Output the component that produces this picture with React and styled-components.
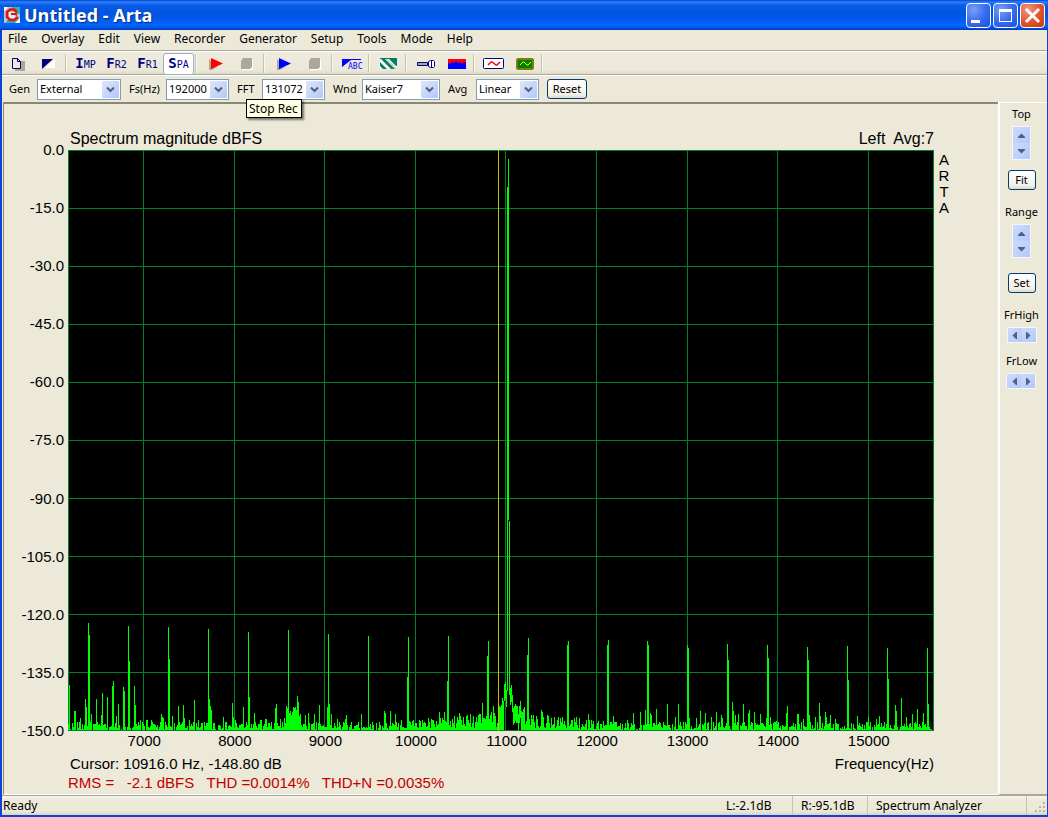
import React from 'react'
import { styled, createGlobalStyle } from 'styled-components'

const GlobalStyle = createGlobalStyle`
    * {
        box-sizing: border-box;
    }
    body {
        margin: 0;
        font-family: "Noto Sans", Tahoma, sans-serif;
        font-size: 12px;
        line-height: 16px;
        color: #000;
        background: #ece9d8;
    }
`

const Window = styled.div`
    display: flex;
    flex-direction: column;
    min-height: 100vh;
    background: #ece9d8;
    border: solid #0a43d6;
    border-width: 0 2px 2px 2px;
    border-right-width: 1px;
`

const TitleBar = styled.header`
    display: flex;
    align-items: center;
    gap: 4px;
    height: 30px;
    margin: 0 -1px 0 -2px;
    padding: 0 3px 0 4px;
    background: linear-gradient(#0046d8 0, #2a80f8 2px, #0a5ce6 5px, #0055e0 12px, #0058ea 18px, #0066fe 25px, #0055e5 28px, #0038b8 30px);
`

const Title = styled.h1`
    flex: 1;
    margin: 0;
    font-family: "Open Sans", "Trebuchet MS", sans-serif;
    font-size: 18px;
    line-height: 24px;
    font-weight: 700;
    color: #fff;
    text-shadow: 1px 1px 1px #0a2a80;
`

const TitleButtons = styled.div`
    display: flex;
    gap: 2px;
`

const TitleButton = styled.button`
    display: flex;
    width: 25px;
    height: 25px;
    padding: 0;
    border: 1px solid #fff;
    border-radius: 4px;
    background: ${props => props.$close
        ? "radial-gradient(circle at 30% 25%, #f09a80, #e2502c 55%, #c43a10)"
        : "radial-gradient(circle at 30% 25%, #7aa0f4, #3a6cf0 50%, #1a50e0)"};
`

const MenuBar = styled.nav`
    display: flex;
    gap: 14px;
    height: 22px;
    padding: 0 6px 3px;
    border-bottom: 1px solid #fff;
    box-shadow: inset 0 -1px #aca899;
`

const MenuItem = styled.button`
    padding: 0;
    border: none;
    background: none;
    font: inherit;
`

const Toolbar = styled.div`
    display: flex;
    align-items: center;
    height: 24px;
    border-bottom: 1px solid #fff;
    background: linear-gradient(#efecde, #ebe8d8 18px, #dedbc8 22px, #aca899 22px);
`

const ToolButton = styled.button`
    display: flex;
    align-items: center;
    justify-content: center;
    width: 31px;
    height: 22px;
    padding: 0;
    border: 1px solid ${props => props.$pressed ? "#98b0c8" : "transparent"};
    border-radius: 3px;
    background: ${props => props.$pressed ? "#fff" : "none"};
    font-family: "DejaVu Sans Mono", monospace;
    font-size: 10px;
    line-height: 16px;
    color: #000080;
`

const ToolText = styled.span`
    display: flex;
    align-items: baseline;
`

const Initial = styled.span`
    font-size: 14px;
    font-weight: 700;
`

const Separator = styled.span`
    width: 6px;
    height: 19px;
    background: linear-gradient(90deg, transparent 1px, #c5c2b2 1px, #c5c2b2 2px, #f8f7f0 2px, #f8f7f0 3px, transparent 3px);
`

const SettingsBar = styled.form`
    display: flex;
    align-items: center;
    height: 26px;
    padding-left: 7px;
`

const SettingLabel = styled.label`
    width: ${props => props.$width}px;
    flex: none;
    font-size: 11px;
`

const ComboBox = styled.span`
    display: grid;
    grid-template-columns: 1fr 17px;
    align-items: center;
    width: ${props => props.$width}px;
    height: 21px;
    margin-right: 8px;
    padding-right: 1px;
    border: 1px solid #7f9db9;
    background: #fff;
`

const Select = styled.select`
    grid-area: 1 / 1 / 2 / 3;
    width: 100%;
    height: 19px;
    padding: 0 0 0 2px;
    border: none;
    background: none;
    appearance: none;
    font: inherit;
    font-size: 11px;
`

const ComboArrow = styled.svg`
    grid-area: 1 / 2 / 2 / 3;
    width: 17px;
    height: 17px;
    border-radius: 1px;
    background: linear-gradient(135deg, #dce6fd, #b4c8f6);
    pointer-events: none;
`

const PushButton = styled.button`
    width: ${props => props.$width}px;
    height: 20px;
    padding: 0;
    border: 1px solid #003c74;
    border-radius: 3px;
    background: linear-gradient(#fff, #f2f0e8 80%, #dcd8cc);
    font: inherit;
    font-size: 11px;
`

const SettingCell = styled.div`
    position: relative;
    display: flex;
    align-items: center;
`

const Tooltip = styled.span`
    position: absolute;
    top: 20px;
    left: 9px;
    z-index: 1;
    padding: 0 3px 0 2px;
    border: 1px solid #000;
    background: #ffffe1;
    box-shadow: 2px 2px 2px rgba(0, 0, 0, 0.5);
    line-height: 17px;
    white-space: nowrap;
`

const Content = styled.main`
    display: flex;
    flex: 1;
`

const PlotPanel = styled.section`
    display: grid;
    grid-template-columns: 64px 1fr 64px;
    grid-template-rows: 20px 1fr 20px auto;
    flex: 1;
    padding: 26px 0 2px;
    margin-left: 1px;
    border-top: 2px solid #8a8778;
    border-left: 1px solid #8a8778;
    border-bottom: 1px solid #fff;
    font-family: "Liberation Sans", Arial, sans-serif;
    font-size: 15px;
`

const PlotHeader = styled.div`
    grid-column: 2;
    display: flex;
    justify-content: space-between;
    padding-left: 2px;
    font-size: 16px;
    line-height: 18px;
    white-space: pre;
`

const YAxis = styled.div`
    grid-column: 1;
    display: flex;
    flex-direction: column;
    justify-content: space-between;
    margin: -8px 0;
    padding-right: 4px;
    text-align: right;
`

const Plot = styled.svg`
    grid-column: 2;
    width: 100%;
    height: 100%;
    min-height: 300px;
    background: #000;
`

const Brand = styled.div`
    grid-column: 3;
    width: 16px;
    margin-left: 2px;
    padding-top: 2px;
    text-align: center;
    word-break: break-all;
`

const XAxis = styled.div`
    grid-column: 2;
    display: grid;
    grid-template-columns: repeat(9, 1fr);
    padding: 2px 20px 0 31px;
    text-align: center;
`

const Readout = styled.div`
    grid-column: 2;
    display: flex;
    justify-content: space-between;
    padding: 4px 0 2px 2px;
    line-height: 17px;
`

const Levels = styled.div`
    grid-column: 2;
    color: #c00000;
    line-height: 18px;
    white-space: pre;
`

const SidePanel = styled.aside`
    display: flex;
    flex-direction: column;
    align-items: center;
    width: 49px;
    padding: 3px 4px 0 0;
    border: solid #fff;
    border-width: 1px 0 0 2px;
    border-bottom: 1px solid #aca899;
    font-size: 11px;
`

const SideGroup = styled.div`
    display: flex;
    flex-direction: column;
    align-items: center;
    gap: 4px;
    margin-bottom: ${props => props.$after}px;
`

const SideButton = styled(PushButton)`
    margin-bottom: 14px;
`

const Spinner = styled.div`
    display: flex;
    flex-direction: ${props => props.$horizontal ? "row" : "column"};
    border: 1px solid #f4f6fc;
`

const SpinButton = styled.button`
    display: flex;
    width: ${props => props.$horizontal ? 14 : 17}px;
    height: ${props => props.$horizontal ? 14 : 16}px;
    align-items: center;
    justify-content: center;
    padding: 0;
    border: none;
    background: linear-gradient(135deg, #cddbfc, #b4c8f8);
`

const SpinArrow = styled.svg`
    flex: none;
    width: 11px;
    height: 11px;
`

const StatusBar = styled.footer`
    display: flex;
    height: 20px;
    border-top: 1px solid #aca899;
    background: linear-gradient(#f6f4ea, #ece9d8 5px, #ece9d8 15px, #d8d4c0);
    line-height: 20px;
`

const StatusCell = styled.span`
    width: ${props => props.$width ? `${props.$width}px` : "auto"};
    flex: ${props => props.$width ? "none" : 1};
    padding-left: ${props => props.$width ? 8 : 1}px;
    border-right: ${props => props.$line ? "1px solid #c5c2b2" : "none"};
`

const Grip = styled.svg`
    align-self: flex-end;
    width: 20px;
    height: 14px;
`

const menus = ["File", "Overlay", "Edit", "View", "Recorder", "Generator", "Setup", "Tools", "Mode", "Help"]

const yTicks = ["0.0", "-15.0", "-30.0", "-45.0", "-60.0", "-75.0", "-90.0", "-105.0", "-120.0", "-135.0", "-150.0"]
const xTicks = [7000, 8000, 9000, 10000, 11000, 12000, 13000, 14000, 15000]
const xLines = [75, 166, 256, 347, 437, 528, 619, 709, 800]

// bin, height above the floor
const peaks = [
    [1, 45], [6, 19], [7, 19], [12, 12], [17, 31], [18, 23], [20, 107], [21, 95], [23, 16], [28, 31], [33, 15], [34, 37],
    [39, 33], [44, 44], [45, 49], [48, 14], [50, 26], [55, 43], [56, 39], [60, 104], [61, 69], [66, 44], [67, 25], [72, 10],
    [78, 10], [79, 10], [83, 10], [93, 16], [94, 13], [95, 12], [100, 103], [101, 71], [104, 14], [110, 24], [115, 25],
    [116, 12], [121, 10], [126, 30], [130, 10], [140, 101], [141, 31], [142, 24], [143, 20], [155, 13], [164, 27], [165, 13],
    [167, 10], [175, 23], [180, 98], [181, 33], [186, 17], [192, 10], [193, 10], [197, 11], [198, 11], [207, 22], [208, 26],
    [212, 11], [216, 12], [218, 24], [219, 22], [220, 100], [221, 17], [222, 19], [223, 15], [224, 18], [225, 23], [226, 22],
    [227, 23], [228, 20], [229, 34], [230, 28], [231, 14], [232, 16], [237, 15], [240, 17], [246, 16], [251, 25], [259, 23],
    [260, 96], [261, 26], [263, 16], [269, 11], [277, 11], [278, 15], [293, 16], [300, 94], [316, 19], [317, 17], [322, 19],
    [327, 16], [333, 10], [339, 53], [340, 93], [345, 10], [354, 10], [360, 12], [365, 10], [371, 18], [376, 18], [379, 49],
    [380, 94], [386, 14], [391, 17], [392, 14], [395, 13], [398, 14], [402, 16], [405, 14], [408, 13], [414, 27], [415, 12],
    [419, 74], [420, 89], [425, 24], [426, 17], [427, 14], [431, 24], [432, 23], [433, 25], [434, 32], [435, 29], [436, 46],
    [437, 48], [438, 40], [442, 42], [443, 45], [444, 35], [445, 22], [446, 24], [447, 26], [448, 24], [449, 24], [450, 16],
    [451, 24], [452, 29], [453, 19], [454, 18], [455, 21], [456, 23], [459, 75], [460, 92], [465, 15], [468, 14], [473, 20],
    [474, 18], [483, 12], [499, 85], [500, 89], [508, 13], [520, 16], [539, 85], [540, 90], [545, 14], [559, 10], [565, 17],
    [572, 18], [577, 20], [579, 89], [580, 85], [582, 17], [583, 15], [588, 21], [599, 26], [607, 13], [610, 26], [619, 85],
    [620, 82], [621, 12], [628, 12], [632, 19], [637, 17], [643, 13], [648, 18], [653, 15], [654, 12], [659, 86], [660, 70],
    [664, 28], [665, 19], [667, 15], [670, 16], [675, 26], [680, 17], [681, 20], [686, 18], [692, 16], [698, 12], [699, 85],
    [700, 72], [702, 13], [708, 9], [718, 17], [719, 24], [729, 16], [730, 16], [735, 11], [739, 83], [740, 70], [741, 15],
    [747, 13], [751, 27], [752, 14], [757, 18], [758, 13], [762, 15], [767, 11], [779, 84], [780, 50], [789, 14], [800, 13],
    [808, 11], [811, 14], [819, 82], [820, 51], [827, 25], [828, 19], [833, 32], [838, 13], [844, 16], [849, 21], [855, 17],
    [859, 82], [860, 26],
]

const spectrumPath = () => {
    const bins = []
    let seed = 17
    for (let i = 0; i < 864; i++) {
        seed = (seed * 1103515245 + 12345) % 2147483648
        const r = seed / 2147483648
        const nearCarrier = Math.max(0, 1 - Math.abs(i - 440) / 110)
        bins.push(Math.round(r * 9 - 0.5 + nearCarrier * (3 + r * 8)))
    }
    peaks.forEach(([bin, height]) => { bins[bin] = height })
    return bins.map((h, i) => {
        if (i > 438 && i < 442) return ""
        // the skirt of the carrier does not reach the floor
        const length = i > 435 && i < 453 ? Math.min(h, 17) : h
        return `M${i} ${580 - h}h1v${length}h-1z`
    }).join("")
}

const Combo = ({ id, label, labelWidth, width, value, children }) => (
    <SettingCell>
        <SettingLabel htmlFor={id} $width={labelWidth}>{label}</SettingLabel>
        <ComboBox $width={width}>
            <Select id={id} defaultValue={value}>
                <option>{value}</option>
            </Select>
            <ComboArrow viewBox="0 0 17 17" aria-hidden="true">
                <path d="M5 6.500l3.500 3.500l3.500-3.500" fill="none" stroke="#4d6185" strokeWidth="2" />
            </ComboArrow>
        </ComboBox>
        {children}
    </SettingCell>
)

const arrows = {
    up: "M2 8h7v-1L5.500 3.500L2 7z",
    down: "M2 3h7v1L5.500 7.500L2 4z",
    left: "M8 2v7h-1L3.500 5.500L7 2z",
    right: "M3 2v7h1L7.500 5.500L4 2z",
}

const Spin = ({ name, horizontal }) => (
    <Spinner $horizontal={horizontal}>
        {(horizontal ? ["left", "right"] : ["up", "down"]).map(direction => (
            <SpinButton key={direction} type="button" $horizontal={horizontal} aria-label={`${name} ${direction}`}>
                <SpinArrow viewBox="0 0 11 11"><path d={arrows[direction]} fill="#4d6185" /></SpinArrow>
            </SpinButton>
        ))}
    </Spinner>
)

const Play = ({ color }) => (
    <svg width="16" height="14" viewBox="0 0 16 14">
        <path d="M1 2v11h3l5-3z" fill="#aca899" />
        <path d="M3 1l12 5.500L3 12z" fill={color} />
    </svg>
)

const Stop = () => (
    <svg width="14" height="14" viewBox="0 0 14 14">
        <path d="M3 2h10v11h-11v-1z" fill="#fff" />
        <path d="M3 1h9v9l-2 2H1V4z" fill="#aca899" />
    </svg>
)

const App = () => {
  return (
    <>
        <GlobalStyle />
        <Window>
            <TitleBar>
                <svg width="16" height="16" viewBox="0 0 16 16">
                    <rect width="16" height="16" fill="#b8c8c8" />
                    <path d="M8 0h8v7h-5zM2 15l3-4 4 2 5-3v6H2z" fill="#30b0b8" />
                    <path d="M0 0h4L0 4zM11 16l5-5v5z" fill="#fff" />
                    <path d="M5 5h6v6H5z" fill="#d8f0f0" />
                    <path d="M13 5L10 2.500H6L3 5v5l3 3h4l4-3" fill="none" stroke="#e81010" strokeWidth="2.500" />
                    <path d="M7 6h6v3l-2-1H7z" fill="#e81010" />
                </svg>
                <Title>Untitled - Arta</Title>
                <TitleButtons>
                    <TitleButton aria-label="Minimize">
                        <svg width="23" height="23"><path d="M4 16h9v3H4z" fill="#fff" /></svg>
                    </TitleButton>
                    <TitleButton aria-label="Maximize">
                        <svg width="23" height="23"><path d="M5 5h13v13H5zM6 8v9h11V8z" fillRule="evenodd" fill="#fff" /></svg>
                    </TitleButton>
                    <TitleButton $close aria-label="Close">
                        <svg width="23" height="23"><path d="M5 5l13 13M18 5L5 18" stroke="#fff" strokeWidth="3" /></svg>
                    </TitleButton>
                </TitleButtons>
            </TitleBar>
            <MenuBar>
                {menus.map(menu => <MenuItem key={menu}>{menu}</MenuItem>)}
            </MenuBar>
            <Toolbar role="toolbar">
                <ToolButton aria-label="New">
                    <svg width="16" height="14" viewBox="0 0 16 14">
                        <path d="M8 4h7v10H5v-2h3z" fill="#aca899" />
                        <path d="M2.500 1.500h5l3 3v7h-8zM7.500 1.500v3h3" fill="#ece9d8" stroke="#000080" />
                    </svg>
                </ToolButton>
                <ToolButton aria-label="Overlay">
                    <svg width="14" height="12" viewBox="0 0 14 12">
                        <path d="M0 1h11L0 11z" fill="#000080" />
                        <path d="M13 1v9H3z" fill="#fff" />
                    </svg>
                </ToolButton>
                <Separator />
                <ToolButton><ToolText><Initial>I</Initial>MP</ToolText></ToolButton>
                <ToolButton><ToolText><Initial>F</Initial>R2</ToolText></ToolButton>
                <ToolButton><ToolText><Initial>F</Initial>R1</ToolText></ToolButton>
                <ToolButton $pressed aria-pressed="true"><ToolText><Initial>S</Initial>PA</ToolText></ToolButton>
                <Separator />
                <ToolButton aria-label="Record"><Play color="#f00" /></ToolButton>
                <ToolButton aria-label="Stop Rec"><Stop /></ToolButton>
                <Separator />
                <ToolButton aria-label="Generate"><Play color="#00f" /></ToolButton>
                <ToolButton aria-label="Stop generator"><Stop /></ToolButton>
                <Separator />
                <ToolButton aria-label="Label">
                    <svg width="22" height="14" viewBox="0 0 22 14">
                        <path d="M1 2h19v1H10L1 10z" fill="#00f" />
                        <text x="7" y="12" fontSize="8" fontFamily="DejaVu Sans Mono, monospace" fill="#00f">ABC</text>
                    </svg>
                </ToolButton>
                <Separator />
                <ToolButton aria-label="Smoothing">
                    <svg width="18" height="12" viewBox="0 0 18 12">
                        <rect width="17" height="11" fill="#fff" />
                        <path d="M0 0h17v1H0zM1 1h4l10 10h-4zM9 1h8v7h-1zM0 4l7 7H3L0 8z" fill="#008060" />
                        <path d="M6 1h1l10 10h-1z" fill="#aca899" />
                    </svg>
                </ToolButton>
                <Separator />
                <ToolButton aria-label="Microphone">
                    <svg width="20" height="10" viewBox="0 0 20 10">
                        <path d="M1.500 3.500h10v3h-10z" fill="#aca899" stroke="#000080" />
                        <path d="M12.500 2.500l2-1h3l1 1v5l-1 1h-3l-2-1zM15.500 1.500v7" fill="#fff" stroke="#000080" />
                    </svg>
                </ToolButton>
                <ToolButton aria-label="Spectrum">
                    <svg width="18" height="11" viewBox="0 0 18 11">
                        <rect width="18" height="11" y="1" fill="#00f" />
                        <path d="M0 1h18v4l-2-1-2 2-2-2-2 1-2-2-2 2-2-1-2 2-2-1z" fill="#f00" />
                    </svg>
                </ToolButton>
                <Separator />
                <ToolButton aria-label="Signal generator">
                    <svg width="22" height="12" viewBox="0 0 22 12">
                        <rect x=".5" y=".5" width="20" height="10" rx="1" fill="#fff" stroke="#000080" />
                        <path d="M5 7l3-3h1l4 3h1l3-3" fill="none" stroke="#f00" strokeWidth="1.500" />
                    </svg>
                </ToolButton>
                <ToolButton aria-label="Oscilloscope">
                    <svg width="18" height="12" viewBox="0 0 18 12">
                        <rect x="1" y="1" width="16" height="10" rx="1" fill="#008000" stroke="#808000" strokeWidth="2" />
                        <path d="M4 7l3-3h1l3 3h1l3-3" fill="none" stroke="#ff0" />
                    </svg>
                </ToolButton>
                <Separator />
            </Toolbar>
            <SettingsBar>
                <Combo id="gen" label="Gen" labelWidth={28} width={84} value="External" />
                <Combo id="fs" label="Fs(Hz)" labelWidth={37} width={63} value="192000" />
                <Combo id="fft" label="FFT" labelWidth={25} width={63} value="131072">
                    <Tooltip role="tooltip">Stop Rec</Tooltip>
                </Combo>
                <Combo id="wnd" label="Wnd" labelWidth={29} width={78} value="Kaiser7" />
                <Combo id="avg" label="Avg" labelWidth={28} width={63} value="Linear" />
                <PushButton type="button" $width={40}>Reset</PushButton>
            </SettingsBar>
            <Content>
                <PlotPanel>
                    <PlotHeader>
                        <span>Spectrum magnitude dBFS</span>
                        <span>Left  Avg:7</span>
                    </PlotHeader>
                    <YAxis>
                        {yTicks.map(tick => <span key={tick}>{tick}</span>)}
                    </YAxis>
                    <Plot viewBox="0 0 866 581" preserveAspectRatio="none" shapeRendering="crispEdges" role="img" aria-label="Spectrum">
                        {xLines.map(x => <rect key={x} x={x} width="1" height="581" fill="#008028" />)}
                        {yTicks.map((tick, i) => <rect key={tick} y={i * 58} width="866" height="1" fill="#008028" />)}
                        <rect width="1" height="581" fill="#008028" />
                        <rect x="865" width="1" height="581" fill="#008028" />
                        <path d={spectrumPath()} fill="#0f0" />
                        <path d="M440 9h1v361h-1zM439 37h1v504h-1zM441 371h1v174h-1z" fill="#0f0" />
                        <rect x="430" width="1" height="581" fill="#c0c000" />
                    </Plot>
                    <Brand>ARTA</Brand>
                    <XAxis>
                        {xTicks.map(tick => <span key={tick}>{tick}</span>)}
                    </XAxis>
                    <Readout>
                        <span>Cursor: 10916.0 Hz, -148.80 dB</span>
                        <span>Frequency(Hz)</span>
                    </Readout>
                    <Levels>RMS =   -2.1 dBFS   THD =0.0014%   THD+N =0.0035%</Levels>
                </PlotPanel>
                <SidePanel>
                    <SideGroup $after={10}>
                        Top
                        <Spin name="Top" />
                    </SideGroup>
                    <SideButton $width={28}>Fit</SideButton>
                    <SideGroup $after={15}>
                        Range
                        <Spin name="Range" />
                    </SideGroup>
                    <SideButton $width={28}>Set</SideButton>
                    <SideGroup $after={10}>
                        FrHigh
                        <Spin name="FrHigh" horizontal />
                    </SideGroup>
                    <SideGroup $after={0}>
                        FrLow
                        <Spin name="FrLow" horizontal />
                    </SideGroup>
                </SidePanel>
            </Content>
            <StatusBar>
                <StatusCell>Ready</StatusCell>
                <StatusCell $width={75} $line>L:-2.1dB</StatusCell>
                <StatusCell $width={75} $line>R:-95.1dB</StatusCell>
                <StatusCell $width={159} $line>Spectrum Analyzer</StatusCell>
                <Grip viewBox="0 0 20 14">
                    <path d="M16 1h2v2h-2zM12 5h2v2h-2zM16 5h2v2h-2zM8 9h2v2H8zM12 9h2v2h-2zM16 9h2v2h-2z" fill="#b8b4a4" />
                </Grip>
            </StatusBar>
        </Window>
    </>
  )
}

export default App
